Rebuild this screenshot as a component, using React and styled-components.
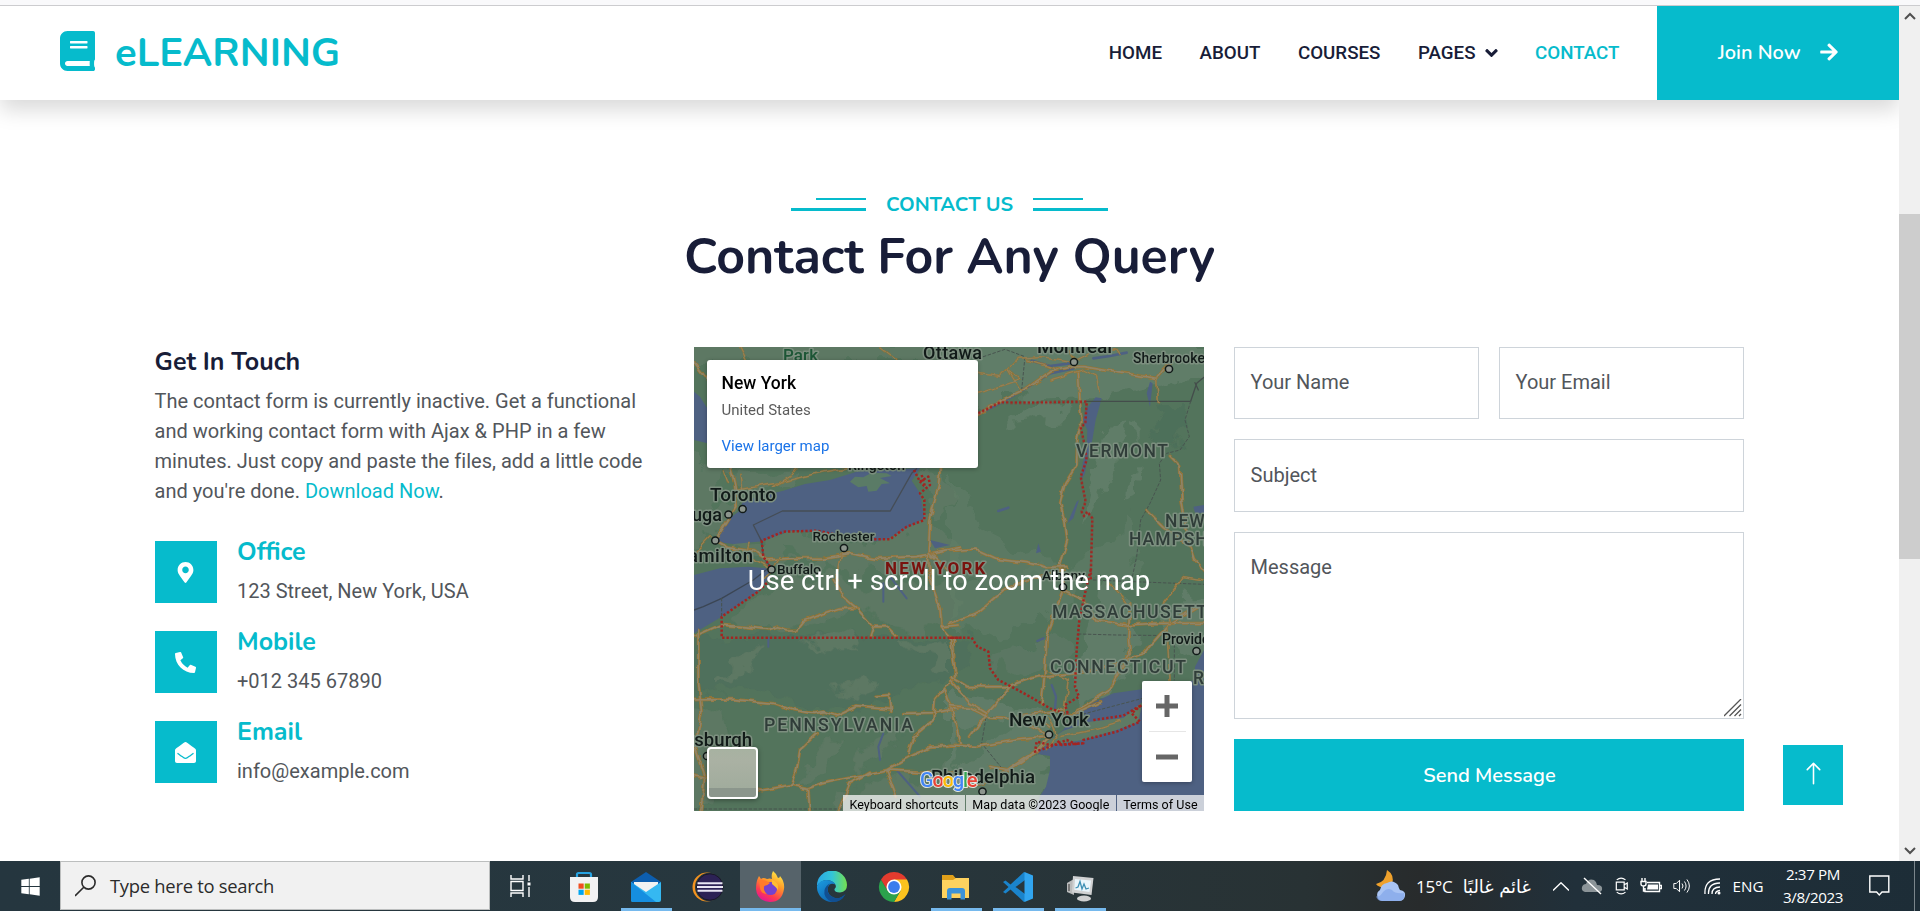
import React from "react";
import styled, { createGlobalStyle } from "styled-components";
import { FaBook, FaAngleDown, FaArrowRight, FaMapMarkerAlt, FaPhoneAlt, FaEnvelopeOpen, FaWindows } from "react-icons/fa";
import { BsArrowUp } from "react-icons/bs";

const teal = "#06bbcc";
const navy = "#181d38";
const body = "#52565b";
const headFont = `Nunito, Lato, "Open Sans", sans-serif`;
const bodyFont = `Roboto, "Liberation Sans", sans-serif`;
const sysFont = `"Segoe UI", "Open Sans", "Noto Sans", "DejaVu Sans", sans-serif`;

const Global = createGlobalStyle`
  *, *::before, *::after { box-sizing: border-box; }
  body { margin: 0; background: #fff; overflow: hidden; font-family: ${bodyFont}; color: ${body}; }
  h1, h2, h3, p { margin: 0; }
  a { color: inherit; text-decoration: none; }
`;

const Screen = styled.div`
  width: 1920px;
  height: 911px;
  display: flex;
  flex-direction: column;
`;
const BrowserEdge = styled.div`
  height: 6px;
  flex: none;
  background: #f9f9fb;
  border-bottom: 1px solid #cccccf;
`;
const Viewport = styled.div`
  height: 855px;
  display: flex;
`;
const Page = styled.main`
  width: 1899px;
  height: 855px;
  overflow: hidden;
  position: relative;
`;

/* header */
const Header = styled.header`
  height: 94px;
  display: flex;
  align-items: stretch;
  background: #fff;
  box-shadow: 0 10px 20px rgba(0, 0, 0, 0.15);
`;
const Brand = styled.a`
  display: flex;
  align-items: center;
  gap: 20px;
  padding-left: 60px;
  color: ${teal};
  font: 700 40px/48px ${headFont};
  svg { width: 35px; height: 40px; margin-bottom: 4px; }
  span { margin-top: -1px; }
`;
const Nav = styled.nav`
  margin-left: auto;
  display: flex;
  align-items: center;
  gap: 37.5px;
  padding-right: 37.5px;
`;
const NavLink = styled.a`
  display: flex;
  align-items: center;
  gap: 9px;
  font-size: 18.75px;
  font-weight: 500;
  line-height: 28px;
  margin-top: -1px;
  color: ${(p) => (p.$active ? teal : navy)};
  svg { width: 13px; height: 20px; }
`;
const JoinButton = styled.a`
  width: 242px;
  display: flex;
  align-items: center;
  justify-content: space-between;
  padding: 0 61px 1px 61px;
  background: ${teal};
  color: #fff;
  font: 600 20px/30px ${headFont};
  svg { width: 18px; height: 20px; margin-bottom: 2px; }
`;

/* section heading */
const Intro = styled.section`
  display: flex;
  flex-direction: column;
  align-items: center;
  padding-top: 93px;
`;
const Eyebrow = styled.div`
  display: flex;
  align-items: center;
  justify-content: center;
  gap: 20px;
  height: 24px;
  width: 317px;
  white-space: nowrap;
  color: ${teal};
  font: 700 20px/24px ${headFont};
  letter-spacing: -0.08px;
`;
const Rule = styled.span`
  display: flex;
  flex-direction: column;
  align-items: ${(p) => (p.$side === "left" ? "flex-end" : "flex-start")};
  gap: 8px;
  margin-top: -1px;
  &::before { content: ""; width: 50px; height: 2px; background: ${teal}; }
  &::after { content: ""; width: 75px; height: 3px; background: ${teal}; }
`;
const Title = styled.h1`
  margin-top: 10px;
  font: 700 50px/60px ${headFont};
  color: ${navy};
  white-space: nowrap;
`;

/* three columns */
const Columns = styled.section`
  display: grid;
  grid-template-columns: 509.5px 510px 510px;
  gap: 30px;
  padding: 60px 0 0 154.5px;
`;
const Info = styled.div`
  display: flex;
  flex-direction: column;
`;
const InfoTitle = styled.h2`
  font: 700 25px/30px ${headFont};
  color: ${navy};
  margin-bottom: 9px;
`;
const Blurb = styled.p`
  font-size: 20px;
  line-height: 30px;
  letter-spacing: 0.015px;
  white-space: nowrap;
  margin-bottom: 35px;
  a { color: ${teal}; }
`;
const Contact = styled.div`
  display: flex;
  gap: 20px;
  height: 62px;
  margin-bottom: 28px;
`;
const IconTile = styled.span`
  width: 62.5px;
  height: 62px;
  flex: none;
  display: grid;
  place-items: center;
  background: ${teal};
  color: #fff;
  svg { width: 21px; height: 21px; }
`;
const ContactText = styled.div`
  h3 { font: 700 25px/30px ${headFont}; color: ${teal}; margin: -4px 0 9px; }
  p { font-size: 20px; line-height: 30px; }
`;

/* map */
const MapFrame = styled.div`
  position: relative;
  width: 510px;
  height: 464px;
  overflow: hidden;
  > svg { display: block; }
`;
const PlaceCard = styled.div`
  position: absolute;
  left: 13px;
  top: 13px;
  width: 271px;
  height: 108px;
  padding: 12px 14.5px;
  border-radius: 3px;
  background: #fff;
  box-shadow: 0 1px 4px rgba(0, 0, 0, 0.3);
  display: flex;
  flex-direction: column;
  font-size: 15px;
  line-height: 20px;
  strong { font-size: 17.5px; font-weight: 500; color: #000; line-height: 22px; }
  span { color: #5b5b5b; margin-top: 6px; }
  a { color: #1a73e8; margin-top: 16px; }
`;
const ScrollHint = styled.div`
  position: absolute;
  inset: 216px 0 auto;
  text-align: center;
  color: #fff;
  font-size: 27.5px;
  line-height: 36px;
  white-space: nowrap;
`;
const Satellite = styled.div`
  position: absolute;
  left: 13px;
  top: 400px;
  width: 51px;
  height: 52px;
  border: 2px solid #fff;
  border-radius: 4px;
  background: linear-gradient(180deg, #a7b2a1, #aab1a3 25%, #a1ac9d 81%, #8b968c 82%);
  box-shadow: 0 1px 5px rgba(0, 0, 0, 0.4);
`;
const ZoomBox = styled.div`
  position: absolute;
  left: 448px;
  top: 334px;
  width: 50px;
  height: 101px;
  display: grid;
  grid-template-rows: 50px 1px 50px;
  place-items: center;
  background: #fff;
  border-radius: 2px;
  box-shadow: 0 1px 4px rgba(0, 0, 0, 0.3);
  color: #666;
  i { width: 37px; height: 1px; background: #e6e6e6; }
`;
const MapLegal = styled.div`
  position: absolute;
  right: 0;
  bottom: 0;
  height: 16px;
  display: flex;
  font-size: 12.5px;
  line-height: 19px;
  color: #000;
  span { padding: 0 6.4px; background: rgba(245, 245, 245, 0.75); white-space: nowrap; letter-spacing: 0.04px; }
  span + span { margin-left: 1px; }
`;
const GoogleMark = styled.div`
  position: absolute;
  left: 226px;
  top: 420px;
  font: 500 20px/26px ${bodyFont};
  letter-spacing: -1.2px;
  paint-order: stroke;
  -webkit-text-stroke: 2px rgba(255, 255, 255, 0.8);
`;
const Letter = styled.span`
  color: ${(p) => p.$c};
`;

/* form */
const Form = styled.form`
  display: grid;
  grid-template-columns: 245px 245px;
  grid-template-rows: 72px 73px 187px 72px;
  gap: 20px;
`;
const Field = styled.label`
  border: 1px solid #ced4da;
  background: #fff;
  padding: ${(p) => (p.$wide && !p.$area ? 20 : 19)}px 15.5px;
  font-size: 20px;
  line-height: 30px;
  grid-column: ${(p) => (p.$wide ? "1 / -1" : "auto")};
  position: relative;
`;
const Grip = styled.svg`
  position: absolute;
  right: 1px;
  bottom: 1px;
`;
const Send = styled.button`
  grid-column: 1 / -1;
  border: 0;
  padding: 1px 0 0 1px;
  background: ${teal};
  color: #fff;
  font: 600 20px/30px ${headFont};
`;
const BackToTop = styled.a`
  position: absolute;
  left: 1783px;
  top: 739px;
  width: 60px;
  height: 60px;
  display: grid;
  place-items: center;
  background: ${teal};
  color: #fff;
  svg { width: 25px; height: 25px; margin-bottom: 4px; }
`;

/* scrollbar */
const Scrollbar = styled.div`
  width: 21px;
  height: 855px;
  background: #f0f0f0;
  display: flex;
  flex-direction: column;
  align-items: center;
  justify-content: space-between;
  padding: 6px 0;
  color: #505050;
`;
const Thumb = styled.div`
  width: 21px;
  height: 345px;
  margin-bottom: 94px;
  background: #cdcdcd;
`;

/* taskbar */
const Taskbar = styled.footer`
  height: 50px;
  flex: none;
  display: flex;
  background: linear-gradient(90deg, #25363f 0%, #27373e 40%, #283234 68%, #282b2c 74%, #21303a 82%, #1d2d37 100%);
  color: #fff;
  font-family: ${sysFont};
`;
const Cell = styled.div`
  width: ${(p) => p.$w}px;
  display: flex;
  align-items: center;
  justify-content: center;
  flex: none;
`;
const Search = styled.div`
  width: 430px;
  height: 49px;
  display: flex;
  align-items: center;
  gap: 14px;
  padding-left: 14px;
  border: 1px solid #bcbebe;
  background: #f1f1f1;
  color: #2b2b2b;
  font-size: 18.4px;
  letter-spacing: -0.27px;
`;
const AppSlot = styled.div`
  width: 62px;
  height: 50px;
  display: flex;
  flex-direction: column;
  align-items: center;
  justify-content: space-between;
  padding-top: 10px;
  background: ${(p) => (p.$active ? "linear-gradient(90deg, transparent 1px, #56636a 1px)" : "none")};
  &::after {
    content: "";
    width: ${(p) => (p.$active ? 61 : 51)}px;
    height: 3px;
    background: ${(p) => (p.$open ? "#76b9ed" : "transparent")};
  }
`;
const Tray = styled.div`
  margin-left: auto;
  display: flex;
  align-items: center;
  font-size: 15.2px;
`;
const Weather = styled.div`
  display: flex;
  align-items: center;
  gap: 10px;
  width: 178px;
  white-space: nowrap;
  font-size: 17px;
  b { font-weight: 400; letter-spacing: -0.2px; }
  bdi { font-family: "DejaVu Sans", sans-serif; font-size: 17.8px; }
`;
const Clock = styled.div`
  width: 82px;
  text-align: center;
  font-size: 15.2px;
  line-height: 23px;
  letter-spacing: -0.4px;
`;
const ShowDesktop = styled.div`
  width: 6px;
  height: 50px;
  border-left: 1px solid #7b868c;
`;

const Road = ({ d, thin }) => (
  <>
    <path d={d} stroke="#98732f" strokeWidth={thin ? 5.5 : 9} />
    <path d={d} stroke="#8f8468" strokeWidth={thin ? 2.5 : 5} />
  </>
);
const Dots = ({ d }) => <path d={d} stroke="#a32420" strokeWidth="7.5" strokeDasharray="7 6" strokeLinecap="butt" />;
const Tile = ({ x, y, children }) => (
  <g transform={`translate(${x} ${y}) scale(.33333)`} fill="none" strokeLinejoin="round" strokeLinecap="round">
    {children}
  </g>
);
const Label = ({ x, y, s = 17, w, c = "#111a18", sp = 0, weight = 500, children }) => (
  <text x={x} y={y} fontSize={s} fontWeight={weight} fill={c} letterSpacing={sp} textLength={w} stroke="#7c8f7f" strokeWidth="3" strokeLinejoin="round" paintOrder="stroke">
    {children}
  </text>
);
const Town = ({ x, y }) => <circle cx={x} cy={y} r="3.6" fill="#8c958d" stroke="#111a18" strokeWidth="1.5" />;

const RegionMap = () => (
  <svg width="510" height="464" viewBox="694 347 510 464" fontFamily="Roboto, sans-serif">
    <defs>
      <filter id="terrain" x="-5%" y="-5%" width="110%" height="110%">
        <feTurbulence type="fractalNoise" baseFrequency="0.045" numOctaves="3" seed="4" />
        <feDisplacementMap in="SourceGraphic" scale="32" xChannelSelector="R" yChannelSelector="G" />
      </filter>
      <filter id="wiggle" x="-5%" y="-5%" width="110%" height="110%">
        <feTurbulence type="fractalNoise" baseFrequency="0.09" numOctaves="2" seed="9" />
        <feDisplacementMap in="SourceGraphic" scale="6" xChannelSelector="R" yChannelSelector="G" />
      </filter>
    </defs>
    <rect x="694" y="347" width="510" height="464" fill="#53745c" />
    {/* lighter lowlands */}
    <g filter="url(#terrain)">
      <Tile x={690} y={340}>
        <g fill="#5d7863">
          <path d="M-30 300L60 380 200 390 330 384 300 430 180 450 100 560 -30 640ZM-30 0H810V60H-30Z" />
          <path d="M100 612L230 600 330 572 440 580 600 605 700 545 810 640 810 720 700 690 560 700 440 690 240 670Z" />
          <path d="M700 384L760 390 790 470 750 560 720 520Z" />
        </g>
        <path d="M100 390L160 420 130 480 60 520ZM300 640L380 650 330 690Z" fill="#53745c" />
      </Tile>
      <Tile x={950} y={340}>
        <g fill="#617d68">
          <path d="M30 0H800V110L640 130 440 175 160 180 30 220ZM190 225L290 190 390 205 350 235 190 245Z" />
          <path d="M440 290L520 240 500 400 440 500 400 570 430 400Z" />
          <path d="M0 410L60 470 90 560 180 620 330 670 500 600 540 500 560 720 0 720Z" opacity=".6" />
          <path d="M530 400L560 390 550 460 525 480ZM540 240L560 250 560 310 545 290ZM630 270L650 280 640 310Z" />
        </g>
        <path d="M640 190L720 190 700 300 650 330 600 300Z" fill="#4e6f5a" />
      </Tile>
      <Tile x={690} y={570}>
        <path d="M-30 210L200 200 850 205 830 310 700 340 620 380 540 405 400 420 260 380 130 350 -30 370Z" fill="#4f6f5c" />
        <g fill="#5d7863">
          <path d="M240 40L400 10 560 60 650 30 800 50 810 130 700 190 560 150 470 120 380 170 200 180 120 150Z" />
          <path d="M90 320L170 250 230 230 180 290 90 340ZM330 215L450 200 510 230 430 240ZM640 220L780 210 780 310 710 270Z" />
          <path d="M520 530L590 490 640 450 640 510 540 580 480 630ZM380 540L430 500 450 515 400 600 330 650 360 570ZM560 520L600 525 580 570Z" />
          <path d="M-30 400L90 430 110 520 60 700 -30 760ZM450 660L580 620 690 630 810 560V760H440Z" />
          <path d="M420 360L510 340 590 350 510 380Z" />
        </g>
      </Tile>
      <Tile x={950} y={570}>
        <g fill="#607c67">
          <path d="M0 60L130 20 280 0 380 30 380 110 310 160 250 130 160 220 90 180 0 190Z" opacity=".7" />
          <path d="M140 270L300 190 370 220 330 280 180 330Z" opacity=".6" />
          <path d="M440 40L550 30 510 160 570 210 530 330 380 410 400 230ZM620 110L800 80V240L690 260 640 180Z" />
          <path d="M0 360L170 400 290 430 340 440 250 550 300 570 270 760H0Z" />
        </g>
        <path d="M20 470L150 430 210 460 90 560 20 600Z" fill="#53745c" opacity=".8" />
      </Tile>
    </g>
    {/* water */}
    <Tile x={690} y={340}>
      <g fill="#4e6182">
        <path d="M75 605L100 550 145 515 160 482 280 452 345 432 420 420 500 395 690 384 665 422 690 460 703 535 640 570 590 598 540 606 430 580 300 572 218 604 130 612Z" />
        <path d="M12 155L30 170 55 210 52 310 12 300ZM720 600L780 615 735 625Z" />
      </g>
      <path d="M480 425L495 410 520 412 545 398 590 400 605 408 570 414 600 430 575 432 560 452 535 455 530 438 505 442Z" fill="#5a7b66" />
      <path d="M190 555L277 513 601 513 665 400 680 386M190 555L215 604 220 650 240 680" stroke="#454d56" strokeWidth="4" />
    </Tile>
    <Tile x={690} y={570}>
      <path d="M12 15L90 -5 175 -10 232 -5 240 20 200 68 95 140 12 190Z" fill="#4e6182" />
      <path d="M12 120L40 110 95 85 190 30 235 -5" stroke="#3b4654" strokeWidth="4" />
      <path d="M95 85V145M12 717L460 717" stroke="#46524c" strokeWidth="3" strokeDasharray="8 7" />
      <path d="M235 205V230M580 490L565 530 570 570M620 600L690 680M580 40V95M600 20L650 85" stroke="#4e6182" strokeWidth="6" />
    </Tile>
    <Tile x={950} y={340}>
      <path d="M437 172L455 175 437 240 427 300 412 355 405 400 394 420 398 370 410 330 412 270 398 240 410 205ZM380 485L387 480 370 535 352 550ZM730 500L762 495V520L735 518ZM600 125L608 130 600 200 590 160ZM265 610L273 635 258 640Z" fill="#4e6182" />
      <path d="M245 62L300 78 360 70M85 222L160 185 235 140 300 100 370 85M430 55L480 48 530 38M145 513L175 503" stroke="#4e6182" strokeWidth="8" />
      <path d="M410 184H722L740 130 762 112M735 128L745 150" stroke="#444d4b" strokeWidth="4" />
      <path d="M722 184L705 240 718 290 690 330 650 340 628 370 632 420 600 490 572 540 560 650 545 720M215 150L225 50 165 28 100 50" stroke="#48544f" strokeWidth="3" strokeDasharray="8 7" />
    </Tile>
    <Tile x={950} y={570}>
      <path d="M762 240L735 290 735 330 690 340 575 358 490 370 425 400 365 440 340 480 270 530 250 550 300 558 300 600 288 650 270 678 255 723H762Z" fill="#4e6182" />
      <path d="M340 482L420 455 520 444 578 395 565 455 500 480 400 510 270 530Z" fill="#5f7a64" />
      <path d="M305 345L318 380 315 415M262 213L280 205" stroke="#4e6182" strokeWidth="7" />
      <path d="M385 192L500 195 673 197V330M430 30L550 35 762 43M180 350L110 430 95 520 160 600M370 440L578 385" stroke="#48544f" strokeWidth="3" strokeDasharray="8 7" />
    </Tile>
    {/* roads */}
    <g filter="url(#wiggle)">
      <Tile x={690} y={340}>
        <Road d="M0 50L60 130 110 300 120 370 135 440 140 500 95 570 75 600 110 620 190 630 230 660 300 655 400 655 480 640 560 655 680 650 810 625" />
        <Road d="M140 450L260 430 380 400 470 384M150 400L155 450M100 390L115 430" thin />
        <Road d="M750 384L745 440 720 540 715 640 720 720M720 640L790 700" />
        <Road d="M180 610L170 650 230 680M270 650L220 720M455 640L440 720M60 590L12 640M250 440L300 410 320 384M570 21L620 58M150 21L170 60" thin />
      </Tile>
      <Tile x={950} y={340}>
        <Road d="M85 220L160 178 230 145 300 95 370 80 400 80 520 100 620 115 640 90 680 50" />
        <Road d="M385 95L390 190 395 245 382 290 380 375 345 430 330 488 345 545 352 600 330 680 340 740" />
        <Road d="M660 345L690 375 695 480 715 600 735 660 780 710M590 510L640 560 720 620" />
        <Road d="M0 635L80 630 140 658 230 668 290 682 350 680" />
        <Road d="M370 65L270 50 205 55 150 110 85 100M300 120L400 90 440 110 447 155M85 160L210 120 175 90 210 150M620 115L625 188M340 21L380 60 440 30 500 30 510 45M230 60L330 90" thin />
      </Tile>
      <Tile x={690} y={570}>
        <Road d="M0 205L90 165 160 170 235 178 260 170 290 180 320 180 340 155 390 135 450 115 500 115 550 170 590 170 620 198" />
        <Road d="M25 180L25 330 35 430 15 530 45 620 30 740M0 390L130 388 250 400 310 420 370 430 400 425 440 438 500 410 600 418M560 378L600 375 604 425M640 430L730 428 810 415" />
        <Road d="M380 490L330 540 320 600 305 645 220 660 0 615M305 645L355 655 400 640 590 600 660 560 720 530 810 525M590 600L690 605 810 605M590 600L620 680M440 740L480 640 540 605M355 655L360 740" />
        <Road d="M715 10L750 110 755 170 810 165M755 170L790 210 795 320 735 390 730 450 670 500 655 550M430 30L460 80 500 115M550 170L540 200M765 360L790 430 810 520" />
      </Tile>
      <Tile x={950} y={570}>
        <Road d="M0 160L80 130 160 60 250 25 340 0M340 50L320 120 290 200 285 300 275 400" />
        <Road d="M340 60L400 90 440 150 530 165 610 160 780 160M540 100L535 200 540 250 500 320 480 360 350 440" />
        <Road d="M0 320L50 350 170 350 260 320 380 310 480 290 580 250 660 160 762 100M0 200L15 300" />
        <Road d="M0 410L60 415 110 440 260 450 300 470M0 525L80 530 200 510 300 500 190 440 340 420M180 350L110 430 60 500" />
        <Road d="M260 540L170 600 100 640 50 650M300 500L260 545 180 600 120 590M350 440L450 395M0 330L60 400 110 430" />
        <Road d="M330 500L430 480 510 455M300 440L320 500 290 540M340 440L355 330 290 300M762 30L700 20 640 100 660 160M530 100L480 40M650 170L660 330" thin />
      </Tile>
    </g>
    {/* state boundary */}
    <Tile x={690} y={340}>
      <Dots d="M672 390L690 425 715 410 720 435 690 460 703 480 703 540 650 560 600 598 550 598M430 582L380 572 280 575 215 602 220 650 240 680M695 405L705 440 690 425" />
    </Tile>
    <Tile x={950} y={340}>
      <Dots d="M85 220L150 187 220 188 410 185 406 250 392 262 405 320 410 360 392 410 407 485 395 515 402 528 412 515 427 535 422 720" />
    </Tile>
    <Tile x={690} y={570}>
      <Dots d="M240 30L200 68 95 140V203H815" />
    </Tile>
    <Tile x={950} y={570}>
      <Dots d="M0 203H65L82 230 115 245 120 295 145 330 175 345 240 380 300 415 355 435 345 405 387 380 375 350 380 240 388 150 405 70 422 0" />
      <Dots d="M430 450L520 437 575 405 545 430 570 455 500 485 400 510 400 520 335 525 320 510M400 520L300 525 260 515 255 545 300 530 350 510 385 525" />
    </Tile>
    {/* labels */}
    <Label x={783} y={361} s={17} w={35} c="#1d5636">Park</Label>
    <Label x={923} y={359} s={18} w={59}>Ottawa</Label>
    <Label x={1037} y={353} s={19} w={75}>Montreal</Label>
    <Label x={1133} y={362.5} s={14} w={72}>Sherbrooke</Label>
    <Label x={848} y={470} s={14} w={57}>Kingston</Label>
    <Label x={710} y={501} s={19} w={66}>Toronto</Label>
    <Label x={692} y={520.5} s={18} w={30}>uga</Label>
    <Label x={688} y={562} s={18.5} w={65}>amilton</Label>
    <Label x={812.5} y={541} s={13.7} w={62}>Rochester</Label>
    <Label x={777} y={574} s={13.7} w={44}>Buffalo</Label>
    <Label x={885} y={574} s={17} w={101} sp={0.6} weight={700} c="#79120e">NEW YORK</Label>
    <Label x={1042} y={580} s={13.7} w={43}>Albany</Label>
    <Label x={1076} y={457} s={17.5} w={93} sp={1} c="#303d39">VERMONT</Label>
    <Label x={1165} y={527} s={17.5} c="#303d39" sp={1}>NEW</Label>
    <Label x={1129} y={545} s={17.5} c="#303d39" sp={1}>HAMPSHIRE</Label>
    <Label x={1052} y={618} s={17.7} c="#303d39" sp={1.5}>MASSACHUSETTS</Label>
    <Label x={1162} y={644} s={14}>Providence</Label>
    <Label x={1050} y={673} s={17.7} w={136} c="#303d39">CONNECTICUT</Label>
    <Label x={1193} y={684} s={17.5} c="#303d39">RHODE</Label>
    <Label x={764} y={731} s={17.7} w={149} c="#303d39">PENNSYLVANIA</Label>
    <Label x={1009} y={726} s={19} w={80}>New York</Label>
    <Label x={931} y={783} s={18.7} w={104}>Philadelphia</Label>
    <Label x={688} y={746} s={18.5} w={64}>tsburgh</Label>
    {[[742.6, 509], [728.5, 514.5], [715.3, 540.5], [844, 548], [771.5, 569.5], [1074, 362], [1169, 369], [1063, 587], [1196.5, 651], [1049, 734.5], [982.5, 791.5], [707, 756]].map(([x, y]) => (
      <Town key={x} x={x} y={y} />
    ))}
  </svg>
);

const contacts = [
  { title: "Office", text: "123 Street, New York, USA", Icon: FaMapMarkerAlt },
  { title: "Mobile", text: "+012 345 67890", Icon: FaPhoneAlt },
  { title: "Email", text: "info@example.com", Icon: FaEnvelopeOpen },
];

const StoreIcon = () => (
  <svg width="30" height="32" viewBox="0 0 30 32">
    <path d="M8 8V3.5Q8 2 9.500 2H20.500Q22 2 22 3.500V8" fill="none" stroke="#27a3e2" strokeWidth="2.200" />
    <path d="M1 6H29V26Q29 31 24 31H6Q1 31 1 26Z" fill="#f2f2f3" />
    <path d="M9.500 12.500h5.200v5.200H9.500Z" fill="#f04e1f" /><path d="M15.700 12.500h5.200v5.200h-5.200Z" fill="#7fba00" />
    <path d="M9.500 18.700h5.200v5.200H9.500Z" fill="#00a4ef" /><path d="M15.700 18.700h5.200v5.200h-5.200Z" fill="#ffb900" />
  </svg>
);
const MailIcon = () => (
  <svg width="32" height="32" viewBox="0 0 32 32">
    <path d="M1 11L16 1 31 11V20H1Z" fill="#0d5eae" />
    <path d="M4 11H28V22H4Z" fill="#f2f2f2" />
    <path d="M1 11L16 21 31 11V29Q31 31 29 31H3Q1 31 1 29Z" fill="#35b8f1" />
    <path d="M1 11L26 31H3Q1 31 1 29Z" fill="#168ee0" />
  </svg>
);
const EclipseIcon = () => (
  <svg width="32" height="32" viewBox="0 0 32 32">
    <circle cx="15" cy="16" r="14.500" fill="#f39320" />
    <circle cx="17.300" cy="16" r="14.300" fill="#27373e" />
    <circle cx="17.800" cy="16" r="13.200" fill="#2c2255" stroke="#17131f" strokeWidth=".8" />
    <path d="M5.500 12.200H30.500M5 16H31M5.500 19.800H30.500" stroke="#e8e6f2" strokeWidth="1.900" />
  </svg>
);
const FirefoxIcon = () => (
  <svg width="32" height="32" viewBox="0 0 32 32">
    <defs>
      <linearGradient id="fx" x1=".8" y1="0" x2=".3" y2="1"><stop offset="0" stopColor="#fff04a" /><stop offset=".4" stopColor="#ff9a28" /><stop offset=".75" stopColor="#ff3a50" /><stop offset="1" stopColor="#e0149b" /></linearGradient>
    </defs>
    <path d="M19 0Q23 3 24 7Q26 7 26 5Q31 11 30 18Q28 31 16 31Q3 30 2 18Q2 10 5 5L7 8Q9 6 13 8Q16 7 18 8Q17 4 19 0Z" fill="url(#fx)" />
    <circle cx="16.500" cy="17.500" r="6.600" fill="#7542cf" />
    <path d="M5 9Q10 8 16 12Q13 15 10 15Q9 20 13 23Q7 23 6 17Z" fill="#ff7b2b" />
    <path d="M18 9Q25 11 24 19Q22 16 18 13Z" fill="#ffbd35" />
  </svg>
);
const EdgeIcon = () => (
  <svg width="32" height="32" viewBox="0 0 32 32">
    <defs>
      <linearGradient id="eg1"><stop offset="0" stopColor="#2aa9e6" /><stop offset=".5" stopColor="#33c5d8" /><stop offset="1" stopColor="#74e04f" /></linearGradient>
      <linearGradient id="eg2" x1="0" y1="0" x2="1" y2="1"><stop offset="0" stopColor="#1b9de2" /><stop offset="1" stopColor="#0b4f9a" /></linearGradient>
    </defs>
    <path d="M1 15A15 15 0 0 1 31 14Q31 21 24 21.500Q18 21.500 18.500 18Q21 16 19 13Q16 9 10 9Q4 10 1 15Z" fill="url(#eg1)" />
    <path d="M1 15Q4 9 10 9Q17 9 19.500 13.500Q14 11 12 16Q10 24 19 27Q25 28 29.500 23Q25 31 16 31A15 15 0 0 1 1 15Z" fill="url(#eg2)" />
    <path d="M12 16Q10 24 19 27Q25 28 29.500 23Q25 32 16 31Q7 27 8.500 19Q10 14 14 12.500Q12.500 14 12 16Z" fill="#114f91" />
  </svg>
);
const ChromeIcon = () => (
  <svg width="32" height="32" viewBox="0 0 32 32">
    <path d="M16 16L3 8.500A15 15 0 0 1 29 8.500Z" fill="#e33b2e" />
    <path d="M16 16V8.500H29A15 15 0 0 1 16 31L22.500 19.750Z" fill="#fcc31e" />
    <path d="M16 16L22.500 19.750 16 31A15 15 0 0 1 3 8.500L9.500 19.750Z" fill="#2ba24c" />
    <path d="M3 8.500L9.500 19.750 16 16V8.500Z" fill="#e33b2e" /><path d="M3 8.500L9.500 19.750 16 22.500 12 25Z" fill="#2ba24c" />
    <circle cx="16" cy="16" r="7.500" fill="#fff" /><circle cx="16" cy="16" r="5.900" fill="#3b7ded" />
  </svg>
);
const FolderIcon = () => (
  <svg width="32" height="32" viewBox="0 0 32 32">
    <path d="M2 4H13L15.500 7H29V12H2Z" fill="#e0a01a" />
    <path d="M2 9H13L16 7H29V27H2Z" fill="#fed25f" />
    <path d="M7 28.500V20Q7 17 10 17H22Q25 17 25 20V28.500H20.500V22.500H11.500V28.500Z" fill="#3c92d8" />
  </svg>
);
const CodeIcon = () => (
  <svg width="32" height="32" viewBox="0 0 32 32">
    <path d="M22 1L8.500 13.500 3.500 9.500 1 11 6.500 16 1 21 3.500 22.500 8.500 18.500 22 31 23.500 30V2Z" fill="#1a84cc" />
    <path d="M23 9L13.500 16 23 23Z" fill="#27373e" />
    <path d="M22.500 1L31 4.500V27.500L22.500 31Z" fill="#31a5ef" />
  </svg>
);
const MonitorIcon = () => (
  <svg width="32" height="32" viewBox="0 0 32 32">
    <path d="M3 12L10 8V24L3 21Z" fill="#b9babb" /><path d="M5 13V20" stroke="#777" strokeWidth="2" />
    <ellipse cx="20" cy="27.500" rx="7" ry="3" fill="#cfd0d1" />
    <path d="M9 5L29.500 7 27.500 24 8 21.500Z" fill="#d0d1d2" /><path d="M11 8L27 9.500 25.500 21 10.300 18.700Z" fill="#eaf5fb" />
    <path d="M11.500 17L14 16 16 10.500 18 18 20 13 22 18 25 17" fill="none" stroke="#3d8fb4" strokeWidth="1.300" />
  </svg>
);

const apps = [
  { Icon: StoreIcon },
  { Icon: MailIcon, open: true },
  { Icon: EclipseIcon },
  { Icon: FirefoxIcon, open: true, active: true },
  { Icon: EdgeIcon },
  { Icon: ChromeIcon },
  { Icon: FolderIcon, open: true },
  { Icon: CodeIcon, open: true },
  { Icon: MonitorIcon, open: true },
];

const Line = ({ w, h, d, sw = 1.4, children }) => (
  <svg width={w} height={h} viewBox={`0 0 ${w} ${h}`} fill="none" stroke="currentColor" strokeWidth={sw}>
    <path d={d} />
    {children}
  </svg>
);

const googleLetters = [["G", "#4285f4"], ["o", "#ea4335"], ["o", "#fbbc05"], ["g", "#4285f4"], ["l", "#34a853"], ["e", "#ea4335"]];

export default function App() {
  return (
    <Screen>
      <Global />
      <BrowserEdge />
      <Viewport>
        <Page>
          <Header>
            <Brand href="#"><FaBook /><span>eLEARNING</span></Brand>
            <Nav>
              <NavLink>HOME</NavLink>
              <NavLink>ABOUT</NavLink>
              <NavLink>COURSES</NavLink>
              <NavLink>PAGES <FaAngleDown /></NavLink>
              <NavLink $active>CONTACT</NavLink>
            </Nav>
            <JoinButton>Join Now <FaArrowRight /></JoinButton>
          </Header>
          <Intro>
            <Eyebrow><Rule $side="left" />CONTACT US<Rule $side="right" /></Eyebrow>
            <Title>Contact For Any Query</Title>
          </Intro>
          <Columns>
            <Info>
              <InfoTitle>Get In Touch</InfoTitle>
              <Blurb>
                The contact form is currently inactive. Get a functional<br />
                and working contact form with Ajax &amp; PHP in a few<br />
                minutes. Just copy and paste the files, add a little code<br />
                and you're done. <a href="#">Download Now</a>.
              </Blurb>
              {contacts.map(({ title, text, Icon }) => (
                <Contact key={title}>
                  <IconTile><Icon /></IconTile>
                  <ContactText><h3>{title}</h3><p>{text}</p></ContactText>
                </Contact>
              ))}
            </Info>
            <MapFrame>
              <RegionMap />
              <GoogleMark>{googleLetters.map(([l, c], i) => <Letter key={i} $c={c}>{l}</Letter>)}</GoogleMark>
              <ScrollHint>Use ctrl + scroll to zoom the map</ScrollHint>
              <PlaceCard><strong>New York</strong><span>United States</span><a href="#">View larger map</a></PlaceCard>
              <Satellite />
              <ZoomBox>
                <Line w={22} h={22} sw={5} d="M11 0V22M0 11H22" />
                <i />
                <Line w={22} h={22} sw={5} d="M0 11H22" />
              </ZoomBox>
              <MapLegal><span>Keyboard shortcuts</span><span>Map data ©2023 Google</span><span>Terms of Use</span></MapLegal>
            </MapFrame>
            <Form>
              <Field>Your Name</Field>
              <Field>Your Email</Field>
              <Field $wide>Subject</Field>
              <Field $wide $area>
                Message
                <Grip width="18" height="18" viewBox="0 0 18 18" fill="none" stroke="#555" strokeWidth="1.300"><path d="M0 17L17 0M5.500 17L17 5.500M10.500 17L17 10.500M15 17L17 15" /></Grip>
              </Field>
              <Send type="button">Send Message</Send>
            </Form>
          </Columns>
          <BackToTop><BsArrowUp /></BackToTop>
        </Page>
        <Scrollbar>
          <Line w={12} h={8} sw={2} d="M1 7L6 2 11 7" />
          <Thumb />
          <Line w={12} h={8} sw={2} d="M1 1L6 6 11 1" />
        </Scrollbar>
      </Viewport>
      <Taskbar>
        <Cell $w={60}><FaWindows size={21} /></Cell>
        <Search>
          <Line w={21} h={22} sw={1.6} d="M9 12L0 21"><circle cx="13.500" cy="7.500" r="6.600" /></Line>
          Type here to search
        </Search>
        <Cell $w={62}>
          <Line w={22} h={22} d="M1 0V4H13V0M1 22V18H13V22M1 6.500H13V15.500H1ZM19 0V6M19 12V22"><path d="M17.500 7.500h3v3h-3Z" fill="currentColor" stroke="none" /></Line>
        </Cell>
        <Cell $w={1} />
        {apps.map(({ Icon, open, active }, i) => (
          <AppSlot key={i} $open={open} $active={active}><Icon /></AppSlot>
        ))}
        <Tray>
          <Weather>
            <svg width="31" height="32" viewBox="0 0 31 32">
              <path d="M12 0Q20 5 17 14L10 18Q3 17 1 14Q11 12 12 0Z" fill="#efa12c" />
              <path d="M7 31A6 6 0 0 1 5 20Q6 14 12 13Q18 9 23 15Q24 19 25 20Q31 21 30 26Q29 31 24 31Z" fill="#a9c4f4" />
              <path d="M8 22Q12 17 17 20Q20 24 29 23Q31 30 24 31H7Q2 31 1 26Q4 28 8 22Z" fill="#7fa5e8" opacity=".65" />
            </svg>
            <b>15°C</b>
            <bdi dir="rtl">غائم غالبًا</bdi>
          </Weather>
          <Cell $w={16}><Line w={16} h={9} d="M0 8.500L8 .8 16 8.500" /></Cell>
          <Cell $w={46}>
            <svg width="22" height="18" viewBox="0 0 22 18"><path d="M4 15Q0 14 1 10Q2 7 5 7Q7 1 13 3Q16 5 16 8Q22 8 21 13Q20 15 18 15Z" fill="#8b9498" /><path d="M3 1L20 17" stroke="#fff" strokeWidth="1.400" /></svg>
          </Cell>
          <Cell $w={14}><Line w={16} h={20} d="M1.500 5.500H10.500V14.500H1.500ZM10.500 8.500L14 6.500V13.500L10.500 11.500M2 3Q7 -1 12 3M2 17Q7 21 12 17" /></Cell>
          <Cell $w={44}>
            <Line w={22} h={16} d="M7 4.500H19.500V13.500H5V10M19.500 7.500H21.500V10.500H19.500M1 3.500H6V6Q6 8 3.500 8Q1 8 1 6ZM2 0V3M5 0V3M3.500 8V13H5"><path d="M8 6.500H18V11.500H7Z" fill="currentColor" stroke="none" /></Line>
          </Cell>
          <Cell $w={18}><Line w={22} h={18} d="M1 6H4L8 2V16L4 12H1ZM11 6Q13.500 9 11 12M14 3.500Q18 9 14 14.500M17 1Q23 9 17 17" sw={1.200} /></Cell>
          <Cell $w={42}>
            <Line w={17} h={17} sw={1.300} d="M1 16Q0 1 16 1M4.500 16Q4 5 16 5M8 16Q8 9 16 9M11.500 16Q11.500 13 16 12.500"><circle cx="15" cy="15" r="1.500" fill="currentColor" stroke="none" /></Line>
          </Cell>
          <Cell $w={30}>ENG</Cell>
          <Cell $w={9} />
          <Clock>2:37 PM<br />3/8/2023</Clock>
          <Cell $w={51}><Line w={21} h={22} d="M.8 1H19.800V17H13L10.300 20 7.600 17H.8Z" /></Cell>
          <Cell $w={9} />
          <ShowDesktop />
        </Tray>
      </Taskbar>
    </Screen>
  );
}
